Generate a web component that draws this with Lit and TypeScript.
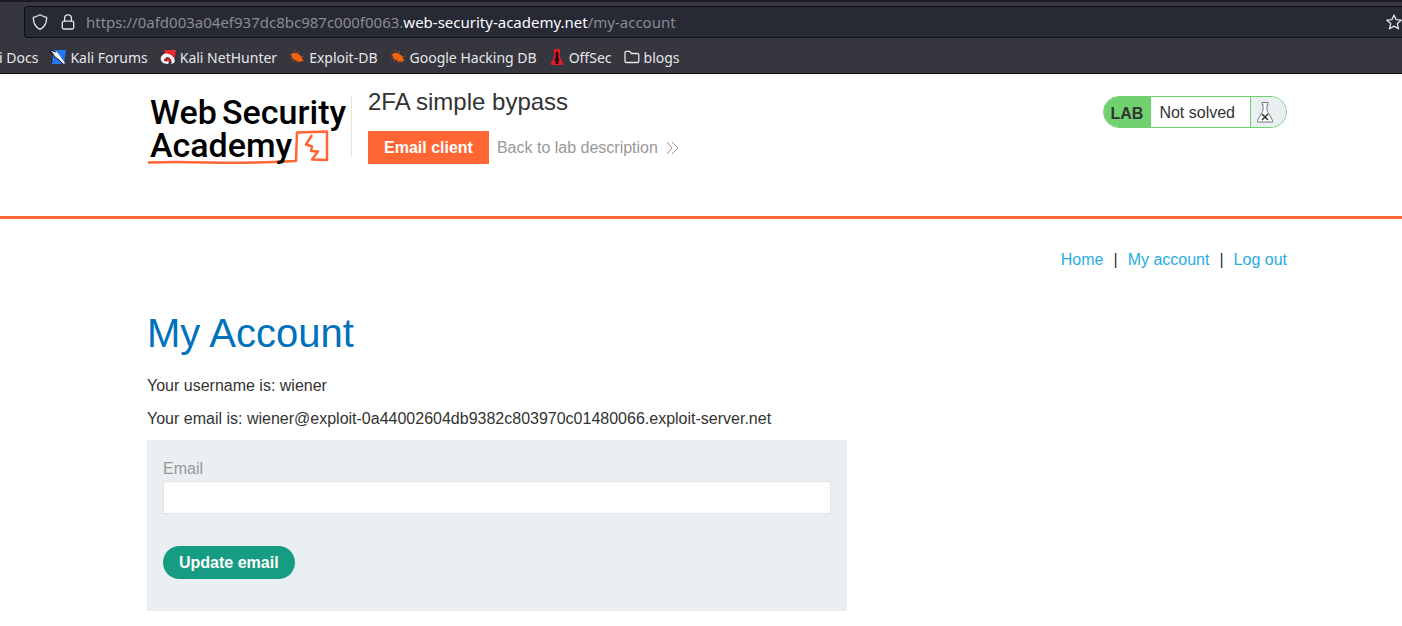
import { LitElement, html, css, svg } from "lit";
import { customElement } from "lit/decorators.js";

const bug = svg`<svg class="fav" viewBox="0 0 16 16" aria-hidden="true">
  <path d="M1 5l3 1M3 9l-2 1M6 3l-1-2M9 4V2M12 8l3-1M12 11l3 1M8 12l1 2M5 11l-1 2" stroke="#a84a20" stroke-width="1" fill="none"/>
  <path d="M2 6L4 4l4 0 4 3 2 4-2 2-4-1-4-2z" fill="#f2620f"/></svg>`;

@customElement("browser-chrome")
export class BrowserChrome extends LitElement {
  static styles = css`
    :host { display: block; background: #35363e; border-top: 2px solid #1b1b21; border-bottom: 1px solid #0d0d12; font-family: "Noto Sans", sans-serif; overflow: hidden; }
    .address { display: flex; align-items: center; margin: 4px 0 0 24px; height: 30px; background: #272935; border: 1px solid #0d0e14; border-right: 0; border-radius: 4px 0 0 4px; color: #8b8b92; font-size: 15px; padding-left: 7px; }
    .address svg { flex: none; width: 16px; height: 16px; margin-right: 12px; fill: none; stroke: #e4e4e7; stroke-width: 1.3; stroke-linejoin: round; stroke-linecap: round; }
    .url { flex: 1; margin-left: -2px; white-space: nowrap; }
    .url b { font-weight: 400; color: #fbfbfe; }
    .star { all: unset; width: 16px; height: 16px; display: flex; }
    .address .star svg { margin: 0; }
    .marks { display: flex; align-items: center; height: 32px; padding-top: 3px; margin-left: -1px; gap: 12px; color: #e6e6ea; font-size: 14px; white-space: nowrap; }
    .marks a { display: flex; align-items: center; gap: 4px; color: inherit; text-decoration: none; }
    .fav { width: 16px; height: 16px; flex: none; }
  `;
  render() {
    return html`
      <div class="address">
        <svg viewBox="0 0 16 16"><path d="M8 .8C10 2.300 12.500 2.600 14.600 3.300C14.900 8.500 13.400 12.600 8 15.300C2.600 12.600 1.100 8.500 1.400 3.300C3.500 2.600 6 2.300 8 .8z"/></svg>
        <svg viewBox="0 0 16 16"><rect x="2.300" y="7.200" width="11.400" height="7.800" rx="1.500"/><path d="M4.600 7V4.200a3.400 3.400 0 0 1 6.800 0V7"/></svg>
        <span class="url">https://0afd003a04ef937dc8bc987c000f0063.<b>web-security-academy.net</b>/my-account</span>
        <button class="star" aria-label="Bookmark this page"><svg viewBox="0 0 16 16"><path d="M8 1l2.100 4.700 5.100.5-3.900 3.400 1.200 5.200L8 12.100l-4.500 2.700 1.200-5.200L.8 6.200l5.100-.5z"/></svg></button>
      </div>
      <nav class="marks">
        <a href="#">i Docs</a>
        <a href="#"><svg class="fav" viewBox="0 0 16 16"><path d="M4 1h12l-2 14H2z" fill="#2478f5"/><path d="M0 1l7 2 3 4 5 7-1 1-5-4-4-3-2-4z" fill="#f5f5f5"/><path d="M0 2l5 6 4 3 4 4M0 1l6 2" stroke="#111" fill="none"/></svg>Kali Forums</a>
        <a href="#"><svg class="fav" viewBox="0 0 16 16"><path d="M5 1h11l-2 12H4L2 5z" fill="#ed2932"/><path d="M2 13C-2 8 4 3 9 5c5 2 7 6 5 9l-3 1C12 11 9 8 6 9c-3 1-2 3 1 3l2 1-1 2c-3 0-5-1-6-2z" fill="#f5f5f5"/><path d="M1 6l4-3M6 9c3-1 5 1 5 5M4 11l3 1" stroke="#171719" fill="none"/></svg>Kali NetHunter</a>
        <a href="#">${bug}Exploit-DB</a>
        <a href="#">${bug}Google Hacking DB</a>
        <a href="#"><svg class="fav" viewBox="0 0 16 16"><path d="M5 0h6v8l3 6v2H2v-2l3-6z" fill="#e31b23"/><path d="M8 2l1.500 2v5l1 2-1 1v3h-3v-3l-1-1 1-2V4z" fill="#260d12"/></svg>OffSec</a>
        <a href="#"><svg class="fav" viewBox="0 0 16 16" fill="none" stroke="#e6e6ea" stroke-width="1.300" stroke-linejoin="round"><path d="M1 3.500q0-1.200 1.200-1.200h3.300L7.500 4.500h6q1.300 0 1.300 1.200v6.600q0 1.200-1.300 1.200H2.200Q1 13.500 1 12.300z"/></svg>blogs</a>
      </nav>`;
  }
}

@customElement("lab-header")
export class LabHeader extends LitElement {
  static styles = css`
    :host { display: block; border-bottom: 3px solid #ff6633; }
    .inner { box-sizing: border-box; max-width: 1140px; min-height: 142px; margin: 0 auto; padding-top: 22px; display: flex; align-items: flex-start; }
    .logo { width: 204px; height: 72px; flex: none; color: #000; text-decoration: none; }
    .logo svg { display: block; width: 204px; height: 72px; }
    .logo text { font-family: Roboto, "Liberation Sans", sans-serif; font-size: 34px; font-weight: 500; }
    .info { border-left: 1px solid #e0e4e6; height: 61px; padding-left: 16px; flex: 1; }
    h2 { margin: -8px 0 15px; font-size: 24px; line-height: 28px; font-weight: 400; }
    .row { display: flex; align-items: center; gap: 8px; }
    .client { background: #ff6633; color: #fff; border: 0; font: bold 16px/33px "Liberation Sans", sans-serif; padding: 0 16px; text-decoration: none; }
    .back { display: flex; align-items: center; gap: 8px; color: #999; text-decoration: none; }
    .status { display: flex; box-sizing: border-box; height: 32px; border: 1px solid #70d16f; border-radius: 16px; overflow: hidden; line-height: 31px; }
    .lab { background: #70d16f; font-weight: 700; padding: 1px 8px 0 7px; }
    .state { padding: 0 15px 0 8px; }
    .flask { width: 35px; background: #eaeff2; border-left: 1px solid #70d16f; }
    .flask svg { display: block; margin: 5px 0 0 5px; }
  `;
  render() {
    return html`<header class="inner">
      <a class="logo" href="#"><svg viewBox="0 0 204 72">
        <path d="M1 66.500Q25 65.500 62 66.500T149 65L150 36.500L180 35.500L180 64L165 63.500L171 55.500L164 55L165 50.500L159 48.500L165 39" fill="none" stroke="#ff6633" stroke-width="2.500" stroke-linejoin="round"/>
        <text x="3" y="28">Web</text><text x="75" y="28">Security</text><text x="3" y="61">Academy</text>
      </svg></a>
      <div class="info">
        <h2>2FA simple bypass</h2>
        <div class="row"><a class="client" href="#">Email client</a>
          <a class="back" href="#">Back to lab description <svg width="13" height="12" viewBox="0 0 13 12" fill="none" stroke="#999"><path d="M1 0l5 6-5 6M6 0l6 6-6 6"/></svg></a></div>
      </div>
      <div class="status"><span class="lab">LAB</span><span class="state">Not solved</span>
        <span class="flask"><svg width="18" height="21" viewBox="0 0 18 21"><path d="M6 .5h6v2h-1v6l5.500 10v1.500H1.500V18.500L7 8.500v-6H6z" fill="#fff" stroke="#777"/><path d="M6 12l6 6M12 12l-6 6" stroke="#333" stroke-width="1.500"/></svg></span></div>
    </header>`;
  }
}

@customElement("app-root")
export class AppRoot extends LitElement {
  static styles = css`
    :host { display: block; background: #fff; color: #333332; font: 16px/19px "Liberation Sans", Arial, sans-serif; }
    lab-header { padding-left: 32px; }
    .page { padding: 0 0 15px 32px; }
    .inner { max-width: 1140px; margin: 0 auto; }
    nav { display: flex; justify-content: flex-end; gap: 10px; padding-top: 31px; }
    a { color: #29abe2; text-decoration: none; }
    h1 { margin: 41px 0 20px; font-size: 40px; line-height: 46px; font-weight: 400; color: #0071bc; }
    p { margin: 0 0 14px; }
    form { box-sizing: border-box; max-width: 700px; margin-top: -2px; padding: 19px 16px 32px; background: #eaeff2; }
    label { display: block; color: #999; margin-bottom: 3px; }
    input { display: block; box-sizing: border-box; width: 100%; height: 33px; border: 1px solid #e0e4e6; background: #fff; font: inherit; padding: 0 8px; margin-bottom: 32px; }
    form button { display: block; border: 0; border-radius: 17px; background: #169c82; color: #fff; font: bold 16px/33px "Liberation Sans", sans-serif; padding: 0 16px; }
  `;
  render() {
    return html`<browser-chrome></browser-chrome>
      <lab-header></lab-header>
      <div class="page"><main class="inner">
        <nav><a href="#">Home</a><span>|</span><a href="#">My account</a><span>|</span><a href="#">Log out</a></nav>
        <h1>My Account</h1>
        <p>Your username is: wiener</p>
        <p>Your email is: wiener@exploit-0a44002604db9382c803970c01480066.exploit-server.net</p>
        <form @submit=${(e: Event) => e.preventDefault()}>
          <label for="email">Email</label>
          <input id="email" type="email" name="email">
          <button type="submit">Update email</button>
        </form>
      </main></div>`;
  }
}
